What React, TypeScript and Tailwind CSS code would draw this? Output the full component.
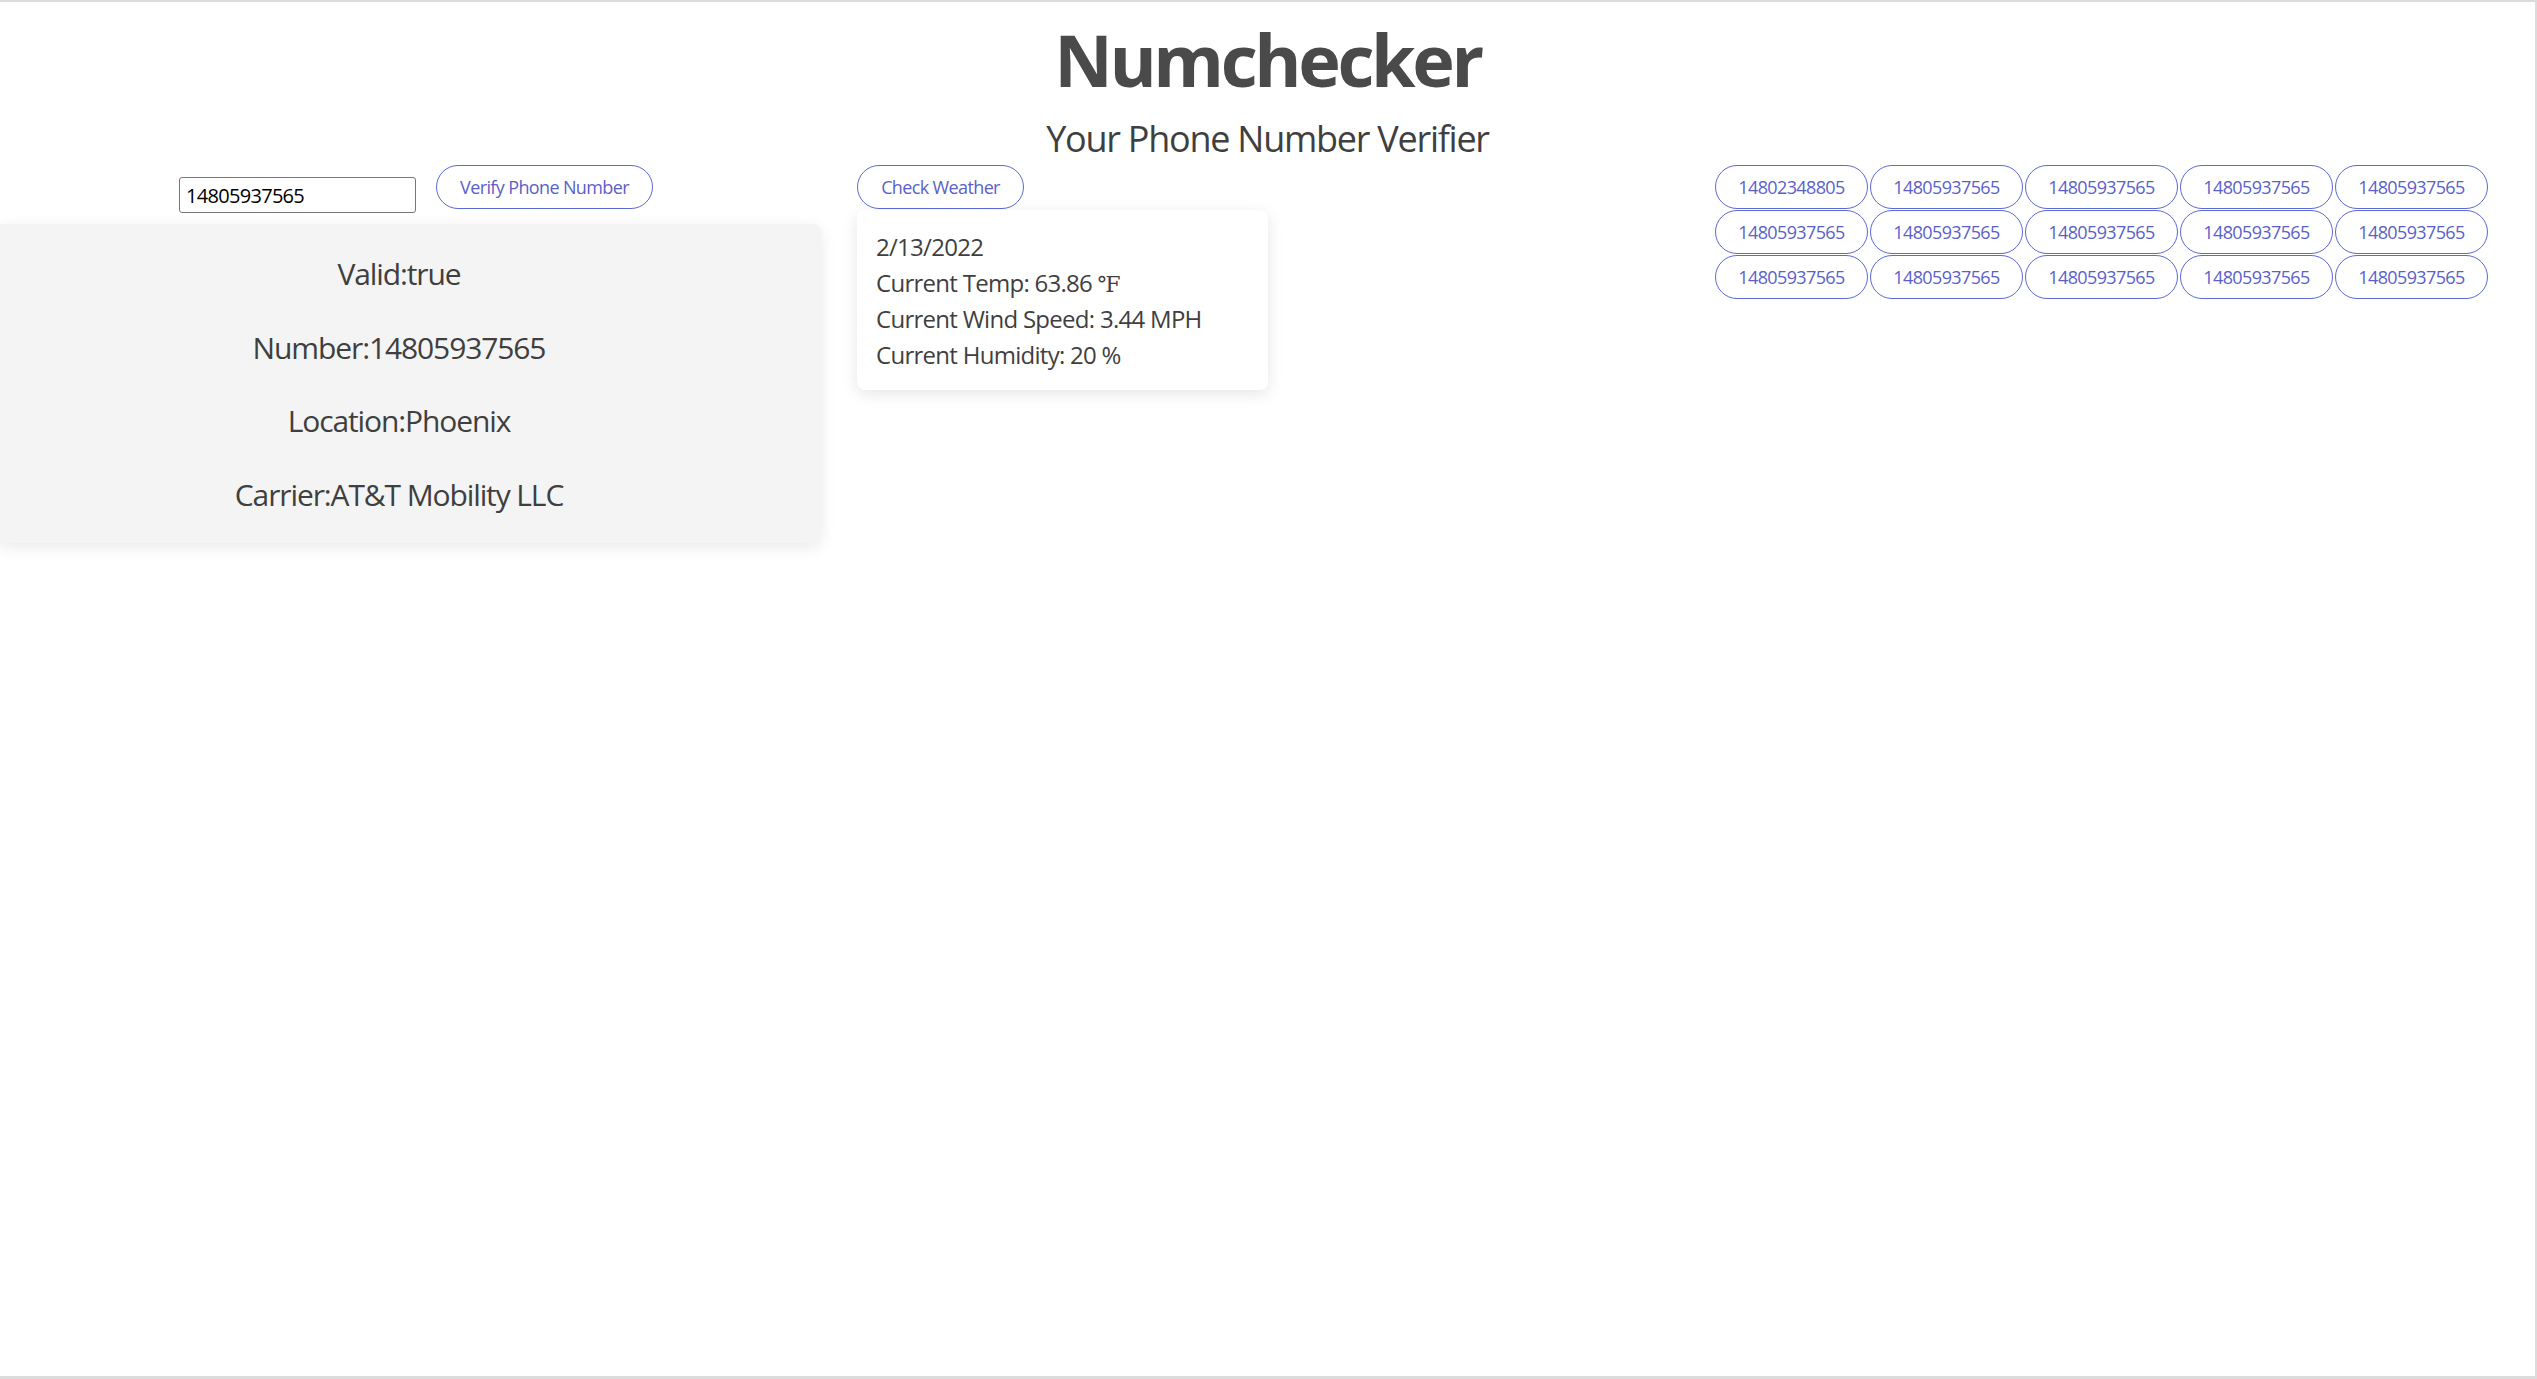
import { useState } from 'react';

const FONT = "font-['Open_Sans','Noto_Sans',sans-serif]";

const saved = [
  '14802348805',
  ...Array.from({ length: 14 }, () => '14805937565'),
];

function PillButton({ label, className = '' }: { label: string; className?: string }) {
  return (
    <button
      type="button"
      className={`h-[44px] rounded-full border border-[#5c68d4] bg-white text-[18px] leading-none tracking-[-0.035em] text-[#5a5fcb] ${className}`}
    >
      {label}
    </button>
  );
}

export default function App() {
  const [phone, setPhone] = useState('14805937565');

  return (
    <div
      className={`${FONT} h-[1379px] overflow-hidden border-t-2 border-r-2 border-b-[3px] border-[#dcdcdc] bg-white text-[#444444]`}
    >
      <header className="flex flex-col items-center">
        <h1 className="mt-[21px] text-[72px] font-bold leading-none tracking-[-0.047em] text-[#4a4a4a]">
          Numchecker
        </h1>
        <h2 className="mt-[26px] text-[36px] leading-none tracking-[-0.035em] text-[#3f3f3f]">
          Your Phone Number Verifier
        </h2>
      </header>

      <main className="mt-[8px] flex items-start">
        {/* lookup */}
        <section className="w-[846px] shrink-0">
          <div className="flex items-start pl-[179px]">
            <input
              value={phone}
              onChange={(e) => setPhone(e.target.value)}
              className="mt-[12px] h-[36px] w-[237px] rounded-[3px] border border-[#767676] px-[6px] text-[20px] tracking-[-0.035em] text-black outline-none"
            />
            <PillButton label="Verify Phone Number" className="ml-[20px] w-[217px]" />
          </div>
          <div className="mt-[11px] w-[821px] rounded-r-[8px] bg-[#f4f4f4] pt-[13px] pr-[23px] pb-[12px] text-center text-[30px] leading-[73.5px] tracking-[-0.037em] text-[#3f3f3f] shadow-[0_4px_16px_rgba(0,0,0,0.09)]">
            <p>Valid:true</p>
            <p>Number:14805937565</p>
            <p>Location:Phoenix</p>
            <p>Carrier:AT&amp;T Mobility LLC</p>
          </div>
        </section>

        {/* weather */}
        <section className="ml-[11px] w-[411px] shrink-0">
          <PillButton label="Check Weather" className="w-[167px]" />
          <div className="mt-px rounded-[8px] bg-white pt-[19px] pr-[19px] pb-[17px] pl-[19px] text-[24px] leading-[36px] tracking-[-0.03em] text-[#3f3f3f] shadow-[0_4px_16px_rgba(0,0,0,0.1)]">
            <p className="h-[36px]">2/13/2022</p>
            <p className="h-[36px]">
              Current Temp: 63.86{' '}
              <span className="font-['Liberation_Serif','DejaVu_Serif',serif] text-[22px] leading-none">℉</span>
            </p>
            <p className="h-[36px]">Current Wind Speed: 3.44 MPH</p>
            <p className="h-[36px]">Current Humidity: 20 %</p>
          </div>
        </section>

        {/* history */}
        <section className="ml-[447px] grid w-[773px] grid-cols-5 gap-x-[2px] gap-y-px">
          {saved.map((num, i) => (
            <PillButton key={i} label={num} className="w-full" />
          ))}
        </section>
      </main>
    </div>
  );
}
